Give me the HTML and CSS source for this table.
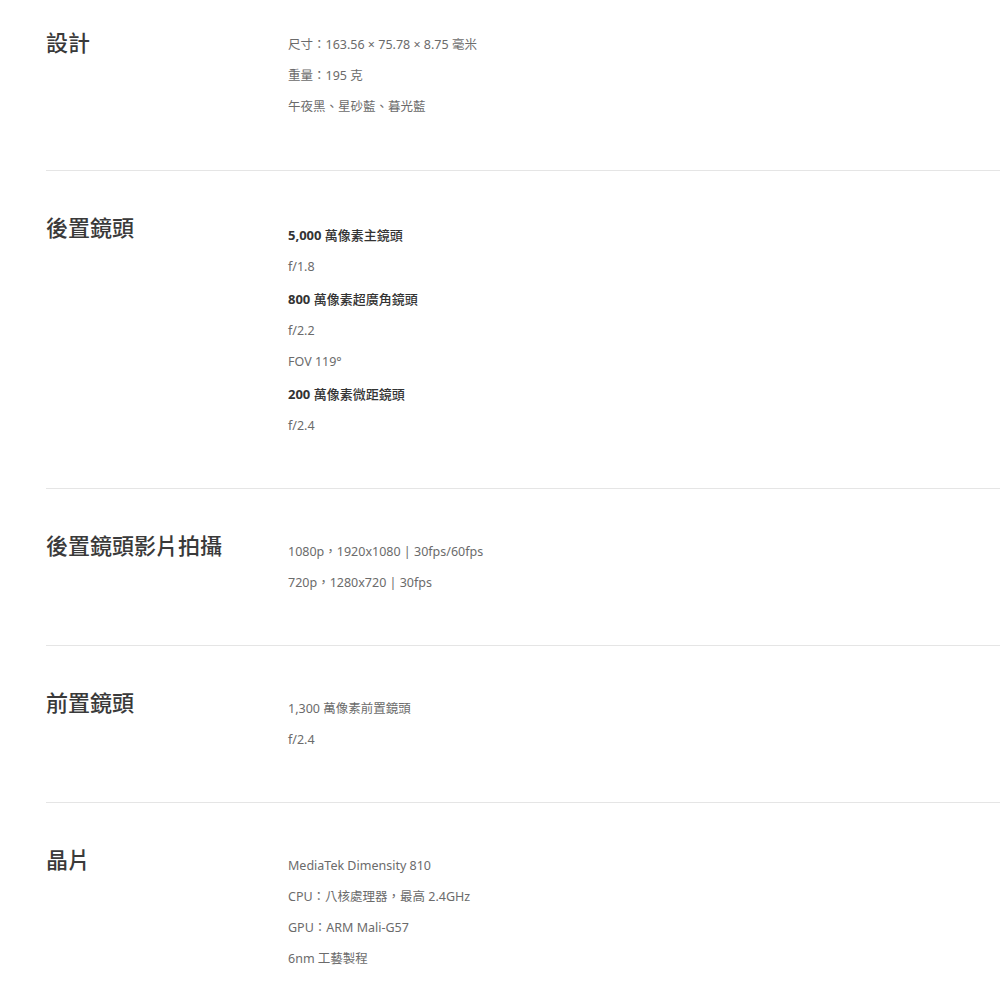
FILE: index.html
```html
<!DOCTYPE html>
<html lang="zh-Hant">
<head>
<meta charset="utf-8">
<title>規格</title>
<link rel="stylesheet" href="styles.css">
</head>
<body>
<div class="specs">
  <section class="spec spec-first">
    <h2 class="spec-title">設計</h2>
    <div class="spec-values">
      <p class="val">尺寸：163.56 × 75.78 × 8.75 毫米</p>
      <p class="val">重量：195 克</p>
      <p class="val">午夜黑、星砂藍、暮光藍</p>
    </div>
  </section>
  <section class="spec">
    <h2 class="spec-title">後置鏡頭</h2>
    <div class="spec-values">
      <p class="val strong"><span class="num">5,000</span> 萬像素主鏡頭</p>
      <p class="val">f/1.8</p>
      <p class="val strong"><span class="num">800</span> 萬像素超廣角鏡頭</p>
      <p class="val">f/2.2</p>
      <p class="val">FOV 119°</p>
      <p class="val strong"><span class="num">200</span> 萬像素微距鏡頭</p>
      <p class="val">f/2.4</p>
    </div>
  </section>
  <section class="spec">
    <h2 class="spec-title">後置鏡頭影片拍攝</h2>
    <div class="spec-values">
      <p class="val">1080p，1920x1080 | 30fps/60fps</p>
      <p class="val">720p，1280x720 | 30fps</p>
    </div>
  </section>
  <section class="spec">
    <h2 class="spec-title">前置鏡頭</h2>
    <div class="spec-values">
      <p class="val">1,300 萬像素前置鏡頭</p>
      <p class="val">f/2.4</p>
    </div>
  </section>
  <section class="spec">
    <h2 class="spec-title">晶片</h2>
    <div class="spec-values">
      <p class="val">MediaTek Dimensity 810</p>
      <p class="val">CPU：八核處理器，最高 2.4GHz</p>
      <p class="val">GPU：ARM Mali-G57</p>
      <p class="val">6nm 工藝製程</p>
    </div>
  </section>
</div>
</body>
</html>
```
FILE: styles.css
```css
html, body {
  margin: 0;
  padding: 0;
  background: #fff;
}
body {
  font-family: "Noto Sans", "Noto Sans CJK TC", sans-serif;
  color: #333;
  overflow: hidden;
}
.specs {
  margin-left: 46px;
}
.spec {
  display: grid;
  grid-template-columns: 242px 1fr;
  align-items: start;
  padding: 44px 0 41px;
  border-bottom: 1px solid #e5e5e5;
}
.spec-first {
  padding-top: 30px;
  padding-bottom: 42px;
}
.spec-title {
  margin: 0;
  font-family: "Noto Sans CJK TC", sans-serif;
  font-size: 22px;
  line-height: 22px;
  font-weight: 500;
  color: #3a3a3a;
  white-space: nowrap;
}
.spec-values {
  margin-top: 9px;
}
.spec-first .spec-values {
  margin-top: 5px;
}
.val {
  margin: 0 0 11px;
  font-size: 12.5px;
  line-height: 20px;
  color: #6b6b6b;
  white-space: nowrap;
}
.val.strong {
  font-size: 13px;
  line-height: 22px;
  font-weight: 500;
  color: #333;
}
.num {
  font-weight: 700;
}
```
